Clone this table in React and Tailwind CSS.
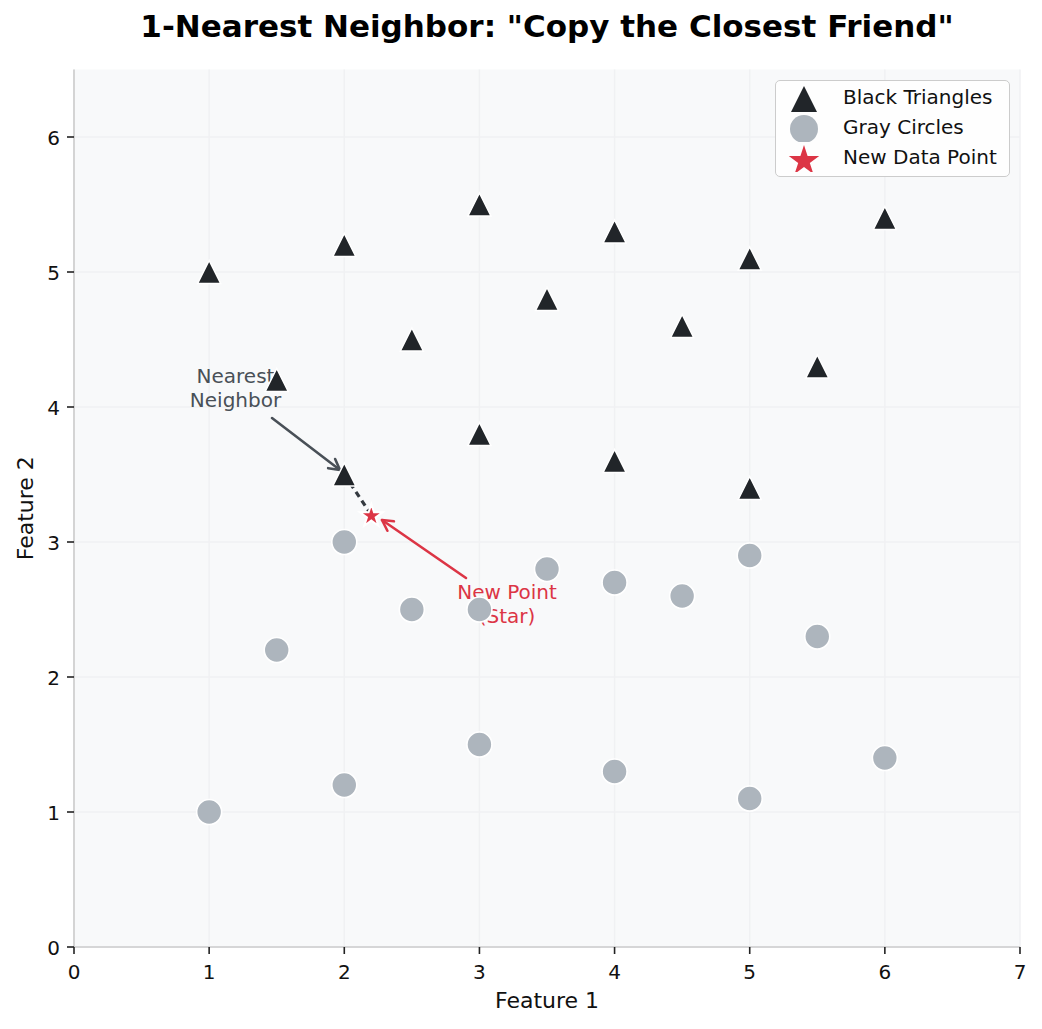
import React from 'react';

const X = (v) => 74 + v * (946 / 7);
const Y = (v) => 947 - v * 135;

const triangles = [
  [1, 5], [2, 5.2], [3, 5.5], [4, 5.3], [5, 5.1], [6, 5.4],
  [1.5, 4.2], [2.5, 4.5], [3.5, 4.8], [4.5, 4.6], [5.5, 4.3],
  [2, 3.5], [3, 3.8], [4, 3.6], [5, 3.4],
];

const circles = [
  [2, 3], [3.5, 2.8], [4, 2.7], [5, 2.9], [2.5, 2.5], [3, 2.5], [4.5, 2.6],
  [5.5, 2.3], [1.5, 2.2], [1, 1], [2, 1.2], [3, 1.5], [4, 1.3], [5, 1.1], [6, 1.4],
];

const DARK = '#212529';
const GRAY = '#adb5bd';
const RED = '#dc3545';
const NOTE = '#495057';

const starPoints = (cx, cy, R) => {
  const r = R * 0.382;
  const pts = [];
  for (let i = 0; i < 10; i++) {
    const rad = i % 2 === 0 ? R : r;
    const a = -Math.PI / 2 + (i * Math.PI) / 5;
    pts.push(`${(cx + rad * Math.cos(a)).toFixed(2)},${(cy + rad * Math.sin(a)).toFixed(2)}`);
  }
  return pts.join(' ');
};

const triPoints = (cx, cy, h) =>
  `${cx},${cy - h} ${cx - h},${cy + h} ${cx + h},${cy + h}`;

// open "->" style arrow head
const Arrow = ({ x1, y1, x2, y2, color }) => {
  const ang = Math.atan2(y2 - y1, x2 - x1);
  const len = 12;
  const spread = 0.5;
  const a1 = ang + Math.PI - spread;
  const a2 = ang + Math.PI + spread;
  const h = `M${x2 + len * Math.cos(a1)},${y2 + len * Math.sin(a1)} L${x2},${y2} L${x2 + len * Math.cos(a2)},${y2 + len * Math.sin(a2)}`;
  return (
    <g stroke={color} strokeWidth="2.6" fill="none" strokeLinecap="round" strokeLinejoin="round">
      <line x1={x1} y1={y1} x2={x2} y2={y2} />
      <path d={h} />
    </g>
  );
};

const xTicks = [0, 1, 2, 3, 4, 5, 6, 7];
const yTicks = [0, 1, 2, 3, 4, 5, 6];

const legendItems = [
  { label: 'Black Triangles', kind: 'tri' },
  { label: 'Gray Circles', kind: 'circle' },
  { label: 'New Data Point', kind: 'star' },
];

const LegendMarker = ({ kind }) => (
  <svg width="32" height="30" viewBox="0 0 32 30" className="shrink-0">
    {kind === 'tri' && <polygon points={triPoints(16, 17.5, 13.5)} fill={DARK} />}
    {kind === 'circle' && <circle cx="16" cy="17" r="14" fill={GRAY} />}
    {kind === 'star' && <polygon points={starPoints(16, 19, 16)} fill={RED} />}
  </svg>
);

export default function App() {
  const top = Y(6.5);
  return (
    <div className="relative w-[1042px] h-[1029px] bg-white font-['DejaVu_Sans','Liberation_Sans',sans-serif] text-black">
      <h1 className="h-[60px] pt-[11px] pl-[52px] text-center text-[31px] leading-[31px] font-bold">
        1-Nearest Neighbor: "Copy the Closest Friend"
      </h1>

      <svg width="1042" height="969" viewBox="0 60 1042 969" className="block">
        {/* axes background */}
        <rect x={X(0)} y={top} width={X(7) - X(0)} height={Y(0) - top} fill="#f8f9fa" />

        {/* grid */}
        <g stroke="#f0f1f3" strokeWidth="1.5">
          {xTicks.map((t) => (
            <line key={`gx${t}`} x1={X(t)} y1={top} x2={X(t)} y2={Y(0)} />
          ))}
          {yTicks.map((t) => (
            <line key={`gy${t}`} x1={X(0)} y1={Y(t)} x2={X(7)} y2={Y(t)} />
          ))}
        </g>

        {/* annotations */}
        <g fontSize="20" fill={NOTE} textAnchor="middle">
          <text x="235.5" y="383">Nearest</text>
          <text x="235.5" y="407">Neighbor</text>
        </g>
        <g fontSize="20" fill={RED} textAnchor="middle">
          <text x="507" y="599">New Point</text>
          <text x="507" y="623">(Star)</text>
        </g>
        <Arrow x1={272} y1={418} x2={340} y2={470} color={NOTE} />
        <Arrow x1={466} y1={578} x2={382} y2={520} color={RED} />

        {/* dashed link to nearest neighbor */}
        <line
          x1={X(2)} y1={Y(3.5)} x2={X(2.2)} y2={Y(3.2)}
          stroke="#343a40" strokeWidth="3.2" strokeDasharray="6 4.5"
        />

        {/* scatter */}
        {circles.map(([a, b], i) => (
          <circle key={`c${i}`} cx={X(a)} cy={Y(b)} r="12.5" fill={GRAY} stroke="#fff" strokeWidth="1.6" />
        ))}
        {triangles.map(([a, b], i) => (
          <polygon key={`t${i}`} points={triPoints(X(a), Y(b), 11.5)} fill={DARK} stroke="#fff" strokeWidth="1.5" strokeLinejoin="miter" />
        ))}
        <polygon points={starPoints(X(2.2), Y(3.2) + 1, 12)} fill={RED} stroke="#fff" strokeWidth="2" />

        {/* spines */}
        <g stroke="#cccccc" strokeWidth="1.6">
          <line x1={X(0)} y1={top} x2={X(0)} y2={Y(0)} />
          <line x1={X(0)} y1={Y(0)} x2={X(7)} y2={Y(0)} />
        </g>

        {/* ticks */}
        <g stroke="#222" strokeWidth="1.6">
          {xTicks.map((t) => (
            <line key={`tx${t}`} x1={X(t)} y1={Y(0)} x2={X(t)} y2={Y(0) + 7} />
          ))}
          {yTicks.map((t) => (
            <line key={`ty${t}`} x1={X(0) - 7} y1={Y(t)} x2={X(0)} y2={Y(t)} />
          ))}
        </g>
        <g fontSize="20" fill="#111">
          {xTicks.map((t) => (
            <text key={`lx${t}`} x={X(t)} y={979} textAnchor="middle">{t}</text>
          ))}
          {yTicks.map((t) => (
            <text key={`ly${t}`} x={60} y={Y(t) + 8} textAnchor="end">{t}</text>
          ))}
        </g>

        {/* axis labels */}
        <text x={X(3.5)} y={1008} fontSize="22" textAnchor="middle" fill="#111">Feature 1</text>
        <text transform={`translate(33, ${(top + Y(0)) / 2}) rotate(-90)`} fontSize="22" textAnchor="middle" fill="#111">
          Feature 2
        </text>
      </svg>

      {/* legend */}
      <div className="absolute left-[775px] top-[80px] w-[235px] h-[97px] rounded-[5px] border border-[#cccccc] bg-white/90 pt-px pl-[12px]">
        {legendItems.map((item) => (
          <div key={item.label} className="flex h-[30px] items-center gap-[23px]">
            <LegendMarker kind={item.kind} />
            <span className="text-[20px] leading-[30px] text-[#111]">{item.label}</span>
          </div>
        ))}
      </div>
    </div>
  );
}
